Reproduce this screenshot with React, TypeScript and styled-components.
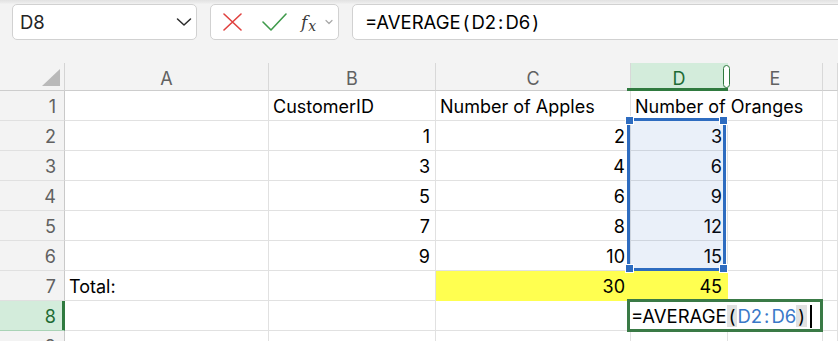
import React from "react";
import styled, { createGlobalStyle } from "styled-components";

const FONT = `Inter, "Liberation Sans", sans-serif`;

const GlobalStyle = createGlobalStyle`
  html, body { margin: 0; padding: 0; }
  body { background: #f3f3f3; font-family: ${FONT}; }
  * { box-sizing: border-box; }
`;

const Page = styled.div`
  width: 838px;
  height: 341px;
  overflow: hidden;
  background: #f3f3f3;
  font-family: ${FONT};
`;

const TopBar = styled.div`
  height: 63px;
  display: flex;
  align-items: flex-start;
  gap: 13px;
  padding: 4px 0 0 12px;
  background: linear-gradient(#e2e2e2 0, #ececec 3px, #f3f3f3 4px);
  overflow: hidden;
`;

const Box = styled.div`
  height: 36px;
  background: #fff;
  border: 1px solid #d1d1d1;
  border-radius: 5px;
  display: flex;
  align-items: center;
  flex-shrink: 0;
`;

const NameBox = styled(Box)`
  width: 185px;
  padding: 0 4px 0 7px;
  justify-content: space-between;
  font-size: 18.5px;
  color: #242424;
`;

const FnBox = styled(Box)`
  width: 129px;
  padding-left: 12px;
`;

const Slot = styled.span<{ $gap: number }>`
  display: inline-flex;
  align-items: center;
  margin-left: ${(p) => p.$gap}px;
`;

const Fx = styled.span`
  font-family: "DejaVu Serif", "Liberation Serif", serif;
  font-style: italic;
  font-size: 17px;
  color: #3a3a3a;
  line-height: 1;
  display: inline-flex;
  align-items: baseline;
  sub {
    font-size: 14px;
    vertical-align: baseline;
    position: relative;
    top: 3px;
    margin-left: 1px;
  }
`;

const FormulaBar = styled(Box)`
  flex: 1;
  margin-right: -10px;
  border-radius: 5px 0 0 5px;
  padding-left: 12px;
  color: #000;
`;

const Formula = styled.span`
  display: inline-flex;
  align-items: center;
  white-space: nowrap;
  font-size: 18.5px;
`;

const Paren = styled.span<{ $hl?: boolean }>`
  display: inline-flex;
  align-items: center;
  height: 22px;
  padding: 0 2px;
  background: ${(p) => (p.$hl ? "#e1e1e1" : "transparent")};
`;

const Ref = styled.span<{ $color: string }>`
  color: ${(p) => p.$color};
`;

const Colon = styled.span`
  padding: 0 2px;
`;

const Caret = styled.span`
  width: 2px;
  height: 23px;
  background: #000;
  margin-left: 3px;
`;

const Sheet = styled.div`
  position: relative;
  display: grid;
  grid-template-columns: 65px 204px 167px 195px 97px 95px 15px;
  grid-template-rows: 28px repeat(9, 30px);
`;

const Corner = styled.div`
  background: #f3f3f3;
  border-right: 1px solid #d4d4d4;
  border-bottom: 1px solid #cdcdcd;
  display: flex;
  align-items: flex-end;
  justify-content: flex-end;
  padding: 0 4px 4px 0;
`;

const Triangle = styled.div`
  width: 18px;
  height: 17px;
  background: #b9b9b9;
  clip-path: polygon(100% 0, 100% 100%, 0 100%);
`;

const ColHeader = styled.div<{ $active?: boolean }>`
  position: relative;
  background: ${(p) => (p.$active ? "#d3ecdb" : "#f3f3f3")};
  color: ${(p) => (p.$active ? "#1e6b34" : "#616161")};
  border-right: 1px solid ${(p) => (p.$active ? "#d3ecdb" : "#d8d8d8")};
  border-bottom: 1px solid #cdcdcd;
  display: flex;
  align-items: center;
  justify-content: center;
  padding-top: 4px;
  font-size: 18px;
  &::after {
    content: "";
    display: ${(p) => (p.$active ? "block" : "none")};
    position: absolute;
    left: -4px;
    right: -1px;
    bottom: -1px;
    height: 3px;
    background: #2f7a3f;
  }
`;

const ResizeGrip = styled.span`
  position: absolute;
  right: -3px;
  top: 2px;
  width: 7px;
  height: 23px;
  border: 1.5px solid #2f7a3f;
  border-radius: 4px;
  background: #fff;
  z-index: 2;
`;

const RowHeader = styled.div<{ $active?: boolean }>`
  background: ${(p) => (p.$active ? "#d3ecdb" : "#f3f3f3")};
  color: ${(p) => (p.$active ? "#1e6b34" : "#616161")};
  border-right: 1px solid ${(p) => (p.$active ? "#2f7a3f" : "#c9c9c9")};
  box-shadow: ${(p) => (p.$active ? "inset -2px 0 0 #2f7a3f" : "none")};
  border-bottom: 1px solid ${(p) => (p.$active ? "#a9d3b6" : "#e0e0e0")};
  display: flex;
  align-items: flex-end;
  justify-content: flex-end;
  padding: 0 8px 3px 0;
  font-size: 18px;
`;

const Cell = styled.div<{ $align?: "left" | "right"; $fill?: string; $spill?: boolean }>`
  background: ${(p) => p.$fill ?? "#fff"};
  border-right: 1px solid ${(p) => (p.$spill ? "transparent" : p.$fill ?? "#e1e1e1")};
  border-bottom: 1px solid ${(p) => p.$fill ?? "#e1e1e1"};
  display: flex;
  align-items: flex-end;
  justify-content: ${(p) => (p.$align === "right" ? "flex-end" : "flex-start")};
  padding: 0 5px 3px 4px;
  font-size: 18px;
  color: #000;
  white-space: nowrap;
  overflow: visible;
  position: relative;
  z-index: ${(p) => (p.$spill ? 1 : 0)};
`;

const Selection = styled.div`
  position: absolute;
  left: 627px;
  top: 55px;
  width: 99px;
  height: 153px;
  border: 3px solid #2e6cc0;
  background: rgba(46, 108, 192, 0.1);
  pointer-events: none;
  z-index: 3;
`;

const Handle = styled.span<{ $x: "left" | "right"; $y: "top" | "bottom" }>`
  position: absolute;
  ${(p) => p.$x}: -5px;
  ${(p) => p.$y}: -5px;
  width: 9px;
  height: 9px;
  background: #2e6cc0;
  border: 1px solid #fff;
`;

const Editor = styled.div`
  position: absolute;
  left: 627px;
  top: 236px;
  width: 196px;
  height: 33px;
  border: 3px solid #3a7a46;
  background: #fff;
  z-index: 4;
  display: flex;
  align-items: center;
  padding: 1px 0 0 1px;
  color: #000;
`;

const columns = ["A", "B", "C", "D", "E", ""];

type Val = string | number;
const rows: Val[][] = [
  ["", "CustomerID", "Number of Apples", "Number of Oranges", "", ""],
  ["", 1, 2, 3, "", ""],
  ["", 3, 4, 6, "", ""],
  ["", 5, 6, 9, "", ""],
  ["", 7, 8, 12, "", ""],
  ["", 9, 10, 15, "", ""],
  ["Total:", "", 30, 45, "", ""],
  ["", "", "", "", "", ""],
  ["", "", "", "", "", ""],
];

const Chevron = () => (
  <svg width="16" height="10" viewBox="0 0 16 10" fill="none">
    <path d="M1.5 2 L8 8 L14.5 2" stroke="#2b2b2b" strokeWidth="1.5" strokeLinecap="round" strokeLinejoin="round" />
  </svg>
);

const CrossIcon = () => (
  <svg width="19" height="18" viewBox="0 0 19 18" fill="none">
    <path d="M1 1 L18 17 M18 1 L1 17" stroke="#e0413f" strokeWidth="1.6" strokeLinecap="round" />
  </svg>
);

const CheckIcon = () => (
  <svg width="25" height="18" viewBox="0 0 25 18" fill="none">
    <path d="M1 9 L9 17 L24 1" stroke="#3f9a4b" strokeWidth="1.6" strokeLinecap="round" strokeLinejoin="round" />
  </svg>
);

const SmallChevron = () => (
  <svg width="8" height="6" viewBox="0 0 8 6" fill="none">
    <path d="M1 1.5 L4 4.5 L7 1.5" stroke="#a8a8a8" strokeWidth="1.2" strokeLinecap="round" strokeLinejoin="round" />
  </svg>
);

const FormulaContent = ({ editing }: { editing?: boolean }) => (
  <Formula>
    =AVERAGE
    <Paren $hl={editing}>(</Paren>
    <Ref $color={editing ? "#3a78c8" : "#000"}>
      D2<Colon>:</Colon>D6
    </Ref>
    <Paren $hl={editing}>)</Paren>
    {editing && <Caret />}
  </Formula>
);

export default function App() {
  return (
    <Page>
      <GlobalStyle />
      <TopBar>
        <NameBox>
          <span>D8</span>
          <Chevron />
        </NameBox>
        <FnBox>
          <Slot $gap={0}>
            <CrossIcon />
          </Slot>
          <Slot $gap={20}>
            <CheckIcon />
          </Slot>
          <Slot $gap={14}>
            <Fx>
              f<sub>x</sub>
            </Fx>
          </Slot>
          <Slot $gap={9}>
            <SmallChevron />
          </Slot>
        </FnBox>
        <FormulaBar>
          <FormulaContent />
        </FormulaBar>
      </TopBar>
      <Sheet>
        <Corner>
          <Triangle />
        </Corner>
        {columns.map((c, i) => (
          <ColHeader key={i} $active={c === "D"}>
            {c}
            {c === "D" && <ResizeGrip />}
          </ColHeader>
        ))}
        {rows.map((r, ri) => (
          <React.Fragment key={ri}>
            <RowHeader $active={ri === 7}>{ri + 1}</RowHeader>
            {r.map((v, ci) => (
              <Cell
                key={ci}
                $align={typeof v === "number" ? "right" : "left"}
                $fill={ri === 6 && (ci === 2 || ci === 3) ? "#ffff50" : undefined}
                $spill={ri === 0 && ci === 3}
              >
                {v}
              </Cell>
            ))}
          </React.Fragment>
        ))}
        <Selection>
          <Handle $x="left" $y="top" />
          <Handle $x="right" $y="top" />
          <Handle $x="left" $y="bottom" />
          <Handle $x="right" $y="bottom" />
        </Selection>
        <Editor>
          <FormulaContent editing />
        </Editor>
      </Sheet>
    </Page>
  );
}
